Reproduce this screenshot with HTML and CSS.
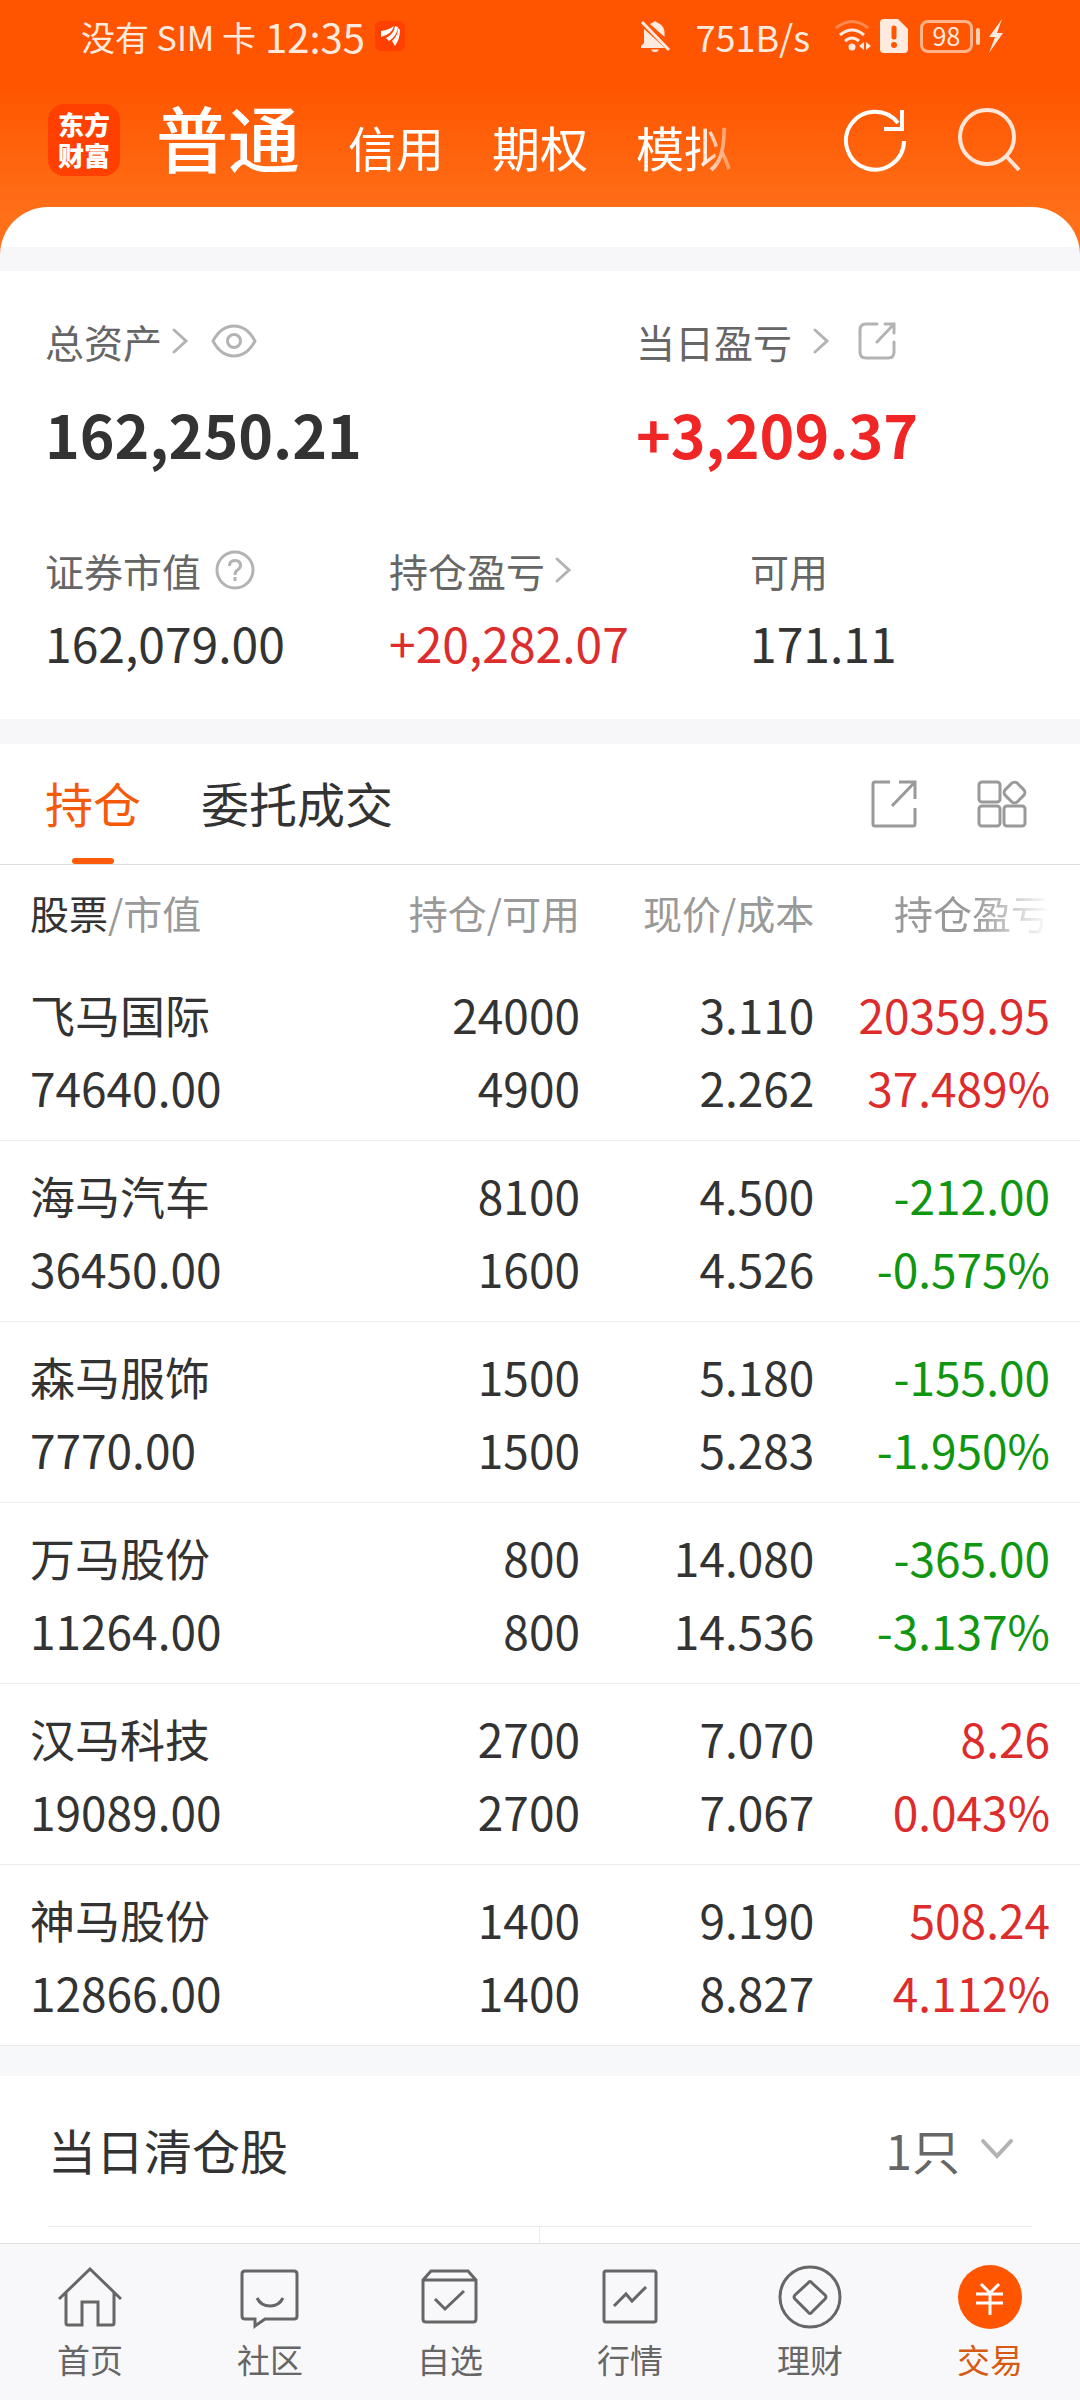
FILE: index.html
```html
<!DOCTYPE html>
<html lang="zh-CN">
<head>
<meta charset="UTF-8">
<meta name="viewport" content="width=device-width, initial-scale=1">
<title>交易 - 持仓</title>
<link rel="stylesheet" href="styles.css">
</head>
<body>
<header class="top">
  <div class="status">
    <span class="carrier">没有 SIM 卡</span>
    <span class="clock">12:35</span>
    <svg class="app-dot" width="30" height="30" viewBox="0 0 30 30" aria-hidden="true">
      <rect width="30" height="30" rx="6" fill="#ff4000"/>
      <path d="M6 10Q14 9 19 5Q17 13 6 16ZM11 17Q19 13 20 5L23 6Q22 15 14 20ZM17 20Q23 15 23 7L25 9Q25 18 20 25Z" fill="#fff"/>
    </svg>
    <span class="speed-group">
      <svg width="32" height="32" viewBox="0 0 32 32" aria-hidden="true">
        <path d="M11 4Q12 3 14 2.500Q16 0 18 2.500Q25 5 25.500 12V17ZM5 9L26 28H2V26L5 23ZM12 29.500H20Q19 32 16 32Q13 32 12 29.500Z" fill="currentColor"/>
        <path d="M3 2L30 30" stroke="currentColor" stroke-width="3"/>
      </svg>
      <span class="speed">751B/s</span>
    </span>
    <span class="signals">
      <svg width="38" height="34" viewBox="0 0 38 34" fill="none" aria-hidden="true">
        <path d="M2 9Q18 -4 34 9" stroke="currentColor" stroke-width="3" opacity=".35"/>
        <path d="M6 16Q18 6 30 16M11 22Q18 16 25 22" stroke="currentColor" stroke-width="3"/>
        <circle cx="18" cy="28" r="3.500" fill="currentColor"/>
        <path d="M30 23V31L25 27ZM32 23V31L37 27Z" fill="currentColor"/>
      </svg>
      <svg width="28" height="34" viewBox="0 0 28 34" aria-hidden="true">
        <path d="M4 0H18L28 10V30Q28 34 24 34H4Q0 34 0 30V4Q0 0 4 0Z" fill="currentColor"/>
        <path d="M14 9V18" stroke="#ff5500" stroke-width="5" stroke-linecap="round"/>
        <circle cx="14" cy="26" r="3" fill="#ff5500"/>
      </svg>
    </span>
    <span class="battery"><span class="battery-box">98</span><span class="battery-nub"></span></span>
    <svg width="16" height="34" viewBox="0 0 16 34" aria-hidden="true"><path d="M14 0L1 18H7L1 34L15 14H9Z" fill="currentColor"/></svg>
  </div>
  <div class="bar">
    <div class="logo">东方<br>财富</div>
    <nav class="accounts" aria-label="账户类型">
      <button type="button" class="account account-on">普通</button>
      <button type="button" class="account">信用</button>
      <button type="button" class="account">期权</button>
      <button type="button" class="account">模拟</button>
    </nav>
    <button type="button" class="icon-btn" aria-label="刷新">
      <svg width="64" height="64" viewBox="0 0 64 64" fill="none" stroke="#fff" stroke-width="4">
        <path d="M61 33A29 29 0 1 1 55 15"/><path d="M41 21H59V2"/>
      </svg>
    </button>
    <button type="button" class="icon-btn" aria-label="搜索">
      <svg width="64" height="64" viewBox="0 0 64 64" fill="none" stroke="#ffe6d9" stroke-width="4">
        <circle cx="29" cy="29" r="27"/><path d="M48 48L61 62"/>
      </svg>
    </button>
  </div>
  <div class="sheet-top"></div>
</header>
<main class="main">
  <section class="assets">
    <div class="assets-row assets-primary">
      <div>
        <div class="label">总资产
          <svg class="chev" width="18" height="28" viewBox="0 0 18 28"><path d="M3 3L15 14L3 25"/></svg>
          <button type="button" class="icon-btn eye" aria-label="隐藏金额">
            <svg width="46" height="34" viewBox="0 0 46 34" fill="none" stroke="#b3b3b3" stroke-width="3"><path d="M2 17Q10 2 23 2Q36 2 44 17Q36 32 23 32Q10 32 2 17Z"/><circle cx="23" cy="17" r="6.500"/></svg>
          </button>
        </div>
        <div class="total">162,250.21</div>
      </div>
      <div>
        <div class="label">当日盈亏
          <svg class="chev chev-far" width="18" height="28" viewBox="0 0 18 28"><path d="M3 3L15 14L3 25"/></svg>
          <button type="button" class="icon-btn share-day" aria-label="分享当日盈亏">
            <svg width="38" height="38" viewBox="0 0 38 38" fill="none" stroke="#b3b3b3" stroke-width="3" stroke-linecap="round"><path d="M19 2H8Q2 2 2 8V30Q2 36 8 36H30Q36 36 36 30V20M27 2H36V11M36 2L19 20"/></svg>
          </button>
        </div>
        <div class="total total-up">+3,209.37</div>
      </div>
    </div>
    <div class="assets-row assets-secondary">
      <div>
        <div class="label">证券市值
          <button type="button" class="icon-btn help" aria-label="说明">
            <svg width="40" height="40" viewBox="0 0 40 40" fill="none" stroke="#b3b3b3" stroke-width="3"><circle cx="20" cy="20" r="18"/><path d="M14.500 16Q14.500 10.500 20 10.500Q25.500 10.500 25.500 15.500Q25.500 18 22.500 20Q20 21.500 20 25"/><path d="M20 27V31"/></svg>
          </button>
        </div>
        <div class="amount">162,079.00</div>
      </div>
      <div>
        <div class="label">持仓盈亏
          <svg class="chev" width="18" height="28" viewBox="0 0 18 28"><path d="M3 3L15 14L3 25"/></svg>
        </div>
        <div class="amount up">+20,282.07</div>
      </div>
      <div>
        <div class="label">可用</div>
        <div class="amount">171.11</div>
      </div>
    </div>
  </section>
  <section class="holdings">
    <div class="tabs">
      <button type="button" class="tab tab-on">持仓</button>
      <button type="button" class="tab">委托成交</button>
      <div class="tools">
        <button type="button" class="icon-btn" aria-label="分享持仓">
          <svg width="46" height="48" viewBox="0 0 46 48" fill="none" stroke="#999" stroke-width="3"><path d="M19 2H4Q2 2 2 4V44Q2 46 4 46H42Q44 46 44 44V28M28 2H44V19M44 2L21 26"/></svg>
        </button>
        <button type="button" class="icon-btn" aria-label="更多功能">
          <svg width="50" height="48" viewBox="0 0 50 48" fill="none" stroke="#999" stroke-width="3"><rect x="2" y="2" width="21" height="20" rx="3"/><rect x="2" y="26" width="21" height="20" rx="3"/><rect x="27" y="26" width="21" height="20" rx="3"/><rect x="29" y="4" width="17" height="17" rx="4" transform="rotate(45 37.500 12.500)"/></svg>
        </button>
      </div>
    </div>
    <table class="stocks">
      <colgroup><col class="c-name"><col class="c-num"><col class="c-num"><col class="c-gain"></colgroup>
      <thead>
        <tr><th scope="col"><span class="strong">股票</span>/市值</th><th scope="col">持仓/可用</th><th scope="col">现价/成本</th><th scope="col"><span class="fade">持仓盈亏</span></th></tr>
      </thead>
      <tbody>
        <tr><td><span class="name">飞马国际</span><span>74640.00</span></td><td><span>24000</span><span>4900</span></td><td><span>3.110</span><span>2.262</span></td><td class="up"><span>20359.95</span><span>37.489%</span></td></tr>
        <tr><td><span class="name">海马汽车</span><span>36450.00</span></td><td><span>8100</span><span>1600</span></td><td><span>4.500</span><span>4.526</span></td><td class="down"><span>-212.00</span><span>-0.575%</span></td></tr>
        <tr><td><span class="name">森马服饰</span><span>7770.00</span></td><td><span>1500</span><span>1500</span></td><td><span>5.180</span><span>5.283</span></td><td class="down"><span>-155.00</span><span>-1.950%</span></td></tr>
        <tr><td><span class="name">万马股份</span><span>11264.00</span></td><td><span>800</span><span>800</span></td><td><span>14.080</span><span>14.536</span></td><td class="down"><span>-365.00</span><span>-3.137%</span></td></tr>
        <tr><td><span class="name">汉马科技</span><span>19089.00</span></td><td><span>2700</span><span>2700</span></td><td><span>7.070</span><span>7.067</span></td><td class="up"><span>8.26</span><span>0.043%</span></td></tr>
        <tr><td><span class="name">神马股份</span><span>12866.00</span></td><td><span>1400</span><span>1400</span></td><td><span>9.190</span><span>8.827</span></td><td class="up"><span>508.24</span><span>4.112%</span></td></tr>
      </tbody>
    </table>
  </section>
  <section class="closed">
    <div class="closed-head">
      <h2 class="closed-title">当日清仓股</h2>
      <button type="button" class="closed-toggle">1只
        <svg width="34" height="22" viewBox="0 0 34 22" fill="none" stroke="#b3b3b3" stroke-width="4" stroke-linecap="round"><path d="M3 3L17 18L31 3"/></svg>
      </button>
    </div>
    <div class="closed-cols"><div></div><div></div></div>
  </section>
</main>
<nav class="dock" aria-label="主导航">
  <a class="dock-item" href="#home">
    <svg width="64" height="64" viewBox="0 0 64 64"><path d="M1 34L32 4L63 34M8 28V58Q8 60 10 60H24V37H40V60H54Q56 60 56 58V28"/></svg>首页</a>
  <a class="dock-item" href="#community">
    <svg width="64" height="64" viewBox="0 0 64 64"><path d="M7 6H56Q59 6 59 9V51Q59 54 56 54H27L17 61V54H7Q4 54 4 51V9Q4 6 7 6ZM19 33Q23 41 32 41Q41 41 45 33"/></svg>社区</a>
  <a class="dock-item" href="#watchlist">
    <svg width="64" height="64" viewBox="0 0 64 64"><path d="M5 15L13 6H50L58 15V54Q58 57 55 57H8Q5 57 5 54ZM5 15H58M17 34L27 44L46 26"/></svg>自选</a>
  <a class="dock-item" href="#market">
    <svg width="64" height="64" viewBox="0 0 64 64"><rect x="6" y="6" width="52" height="51" rx="2"/><path d="M16 41L28 29L34 36L48 22"/></svg>行情</a>
  <a class="dock-item" href="#wealth">
    <svg width="64" height="64" viewBox="0 0 64 64"><circle cx="32" cy="32" r="30"/><path d="M30 18Q32 15 34 18L47 30Q49 32 47 34L34 47Q32 50 30 47L17 34Q15 32 17 30Z"/></svg>理财</a>
  <a class="dock-item dock-on" href="#trade" aria-current="page">
    <svg width="64" height="64" viewBox="0 0 64 64"><circle class="coin" cx="32" cy="32" r="32"/><path class="yen" d="M23 19L32 28L41 19M32 28V50M18 29H45M18 38H45"/></svg>交易</a>
</nav>
</body>
</html>
```

FILE: styles.css
```css
* { box-sizing: border-box; }

body {
  margin: 0;
  min-height: 100vh;
  display: flex;
  flex-direction: column;
  background: #fff;
  color: #333;
  font-family: "Noto Sans CJK SC", "Noto Sans", sans-serif;
}

button {
  margin: 0;
  padding: 0;
  border: 0;
  background: none;
  color: inherit;
  font: inherit;
}

svg { display: block; flex: none; }
.icon-btn { display: block; flex: none; }

/* Header */
.top { background: linear-gradient(#ff5500 84px, #ff7019 220px); }

.status {
  display: flex;
  align-items: center;
  height: 72px;
  padding: 0 76px 0 81px;
  color: #ffeadf;
  white-space: nowrap;
}
.carrier { font-size: 34px; }
.clock { margin-left: 9px; font-size: 40px; }
.app-dot { margin-left: 10px; }
.speed-group { display: flex; align-items: center; gap: 24px; margin-left: auto; }
.speed { font-size: 36px; }
.signals { display: flex; align-items: center; gap: 8px; margin-left: 24px; }
.battery { display: flex; align-items: center; gap: 3px; margin: 0 8px 0 12px; }
.battery-box {
  width: 53px;
  height: 33px;
  border: 3px solid #ffb48c;
  border-radius: 8px;
  font-size: 25px;
  line-height: 25px;
  text-align: center;
}
.battery-nub { width: 4px; height: 17px; border-radius: 2px; background: #ffd0b5; }

.bar {
  display: flex;
  align-items: center;
  height: 135px;
  padding: 0 58px 0 48px;
  color: #fff;
}
.logo {
  flex: none;
  width: 72px;
  height: 72px;
  padding-top: 4px;
  border-radius: 16px;
  background: #ff4000;
  font-size: 26px;
  font-weight: 900;
  line-height: 31px;
  text-align: center;
}
.accounts {
  flex: 1;
  display: flex;
  align-items: baseline;
  gap: 48px;
  margin: 0 99px 0 36px;
  padding-top: 2px;
  overflow: hidden;
  -webkit-mask-image: linear-gradient(to right, #000 calc(100% - 44px), transparent);
  mask-image: linear-gradient(to right, #000 calc(100% - 44px), transparent);
}
.account { flex: none; font-size: 48px; line-height: 108px; }
.account-on { font-size: 72px; font-weight: 500; }
.bar .icon-btn + .icon-btn { margin-left: 51px; }

.sheet-top {
  height: 64px;
  border-radius: 48px 48px 0 0;
  background: linear-gradient(#fff 40px, #f7f7fa 40px);
}

.main { flex: 1; display: flex; flex-direction: column; }
.up { color: #dd2c2c; }
.down { color: #119611; }

/* Account summary */
.assets { padding: 42px 0 47px 45px; }
.assets-row { display: grid; }
.assets-primary { grid-template-columns: 591fr 444fr; }
.assets-secondary { grid-template-columns: 344fr 361fr 330fr; margin-top: 68px; }
.label {
  display: flex;
  align-items: center;
  height: 56px;
  color: #666;
  font-size: 39px;
  white-space: nowrap;
}
.chev { margin-left: 9px; fill: none; stroke: #b3b3b3; stroke-width: 3; stroke-linecap: round; }
.chev-far { margin-left: 20px; }
.eye { margin-left: 22px; }
.share-day { margin-left: 28px; }
.help { margin-left: 14px; }
.total { margin-top: 25px; font-size: 59px; font-weight: 700; line-height: 80px; }
.total-up { color: #f02525; }
.amount { margin-top: 14px; font-size: 48px; line-height: 60px; }

/* Holdings */
.holdings { border-top: 25px solid #f7f7fa; }
.tabs {
  display: flex;
  gap: 60px;
  height: 121px;
  padding: 0 53px 0 45px;
  border-bottom: 1px solid #ddd;
}
.tab { position: relative; padding-bottom: 4px; font-size: 48px; }
.tab-on { color: #f55a0a; }
.tab-on::after {
  content: "";
  position: absolute;
  bottom: 0;
  left: 50%;
  width: 42px;
  height: 6px;
  margin-left: -21px;
  border-radius: 3px;
  background: #ff5a0a;
}
.tools { display: flex; align-items: center; gap: 60px; margin-left: auto; }

.stocks { width: 100%; table-layout: fixed; border-spacing: 0; text-align: right; white-space: nowrap; }
.c-name { width: 32%; }
.c-num { width: 21.7%; }
.c-gain { width: 24.6%; }
.stocks th {
  height: 95px;
  padding: 0 0 2px;
  color: #999;
  font-size: 39px;
  font-weight: 400;
  line-height: 56px;
  text-align: right;
}
.stocks td { padding: 18px 0 16px; border-bottom: 1px solid #ebebeb; font-size: 46px; line-height: 73px; }
.stocks td span { display: block; }
.stocks .name { font-size: 45px; }
.stocks th:first-child, .stocks td:first-child { padding-left: 30px; text-align: left; }
.stocks th:last-child, .stocks td:last-child { padding-right: 30px; }
.strong { color: #333; }
.fade {
  display: inline-block;
  -webkit-mask-image: linear-gradient(to right, #000 52%, transparent);
  mask-image: linear-gradient(to right, #000 52%, transparent);
}

/* Positions closed today */
.closed {
  flex: 1;
  display: flex;
  flex-direction: column;
  padding: 0 48px;
  border-top: 30px solid #f7f8fa;
}
.closed-head {
  display: flex;
  align-items: center;
  justify-content: space-between;
  height: 151px;
  padding: 0 18px 4px 0;
  border-bottom: 1px solid #ebebeb;
}
.closed-title { margin: 0; font-size: 48px; font-weight: 400; }
.closed-toggle { display: flex; align-items: center; gap: 20px; color: #666; font-size: 48px; }
.closed-cols { flex: 1; display: grid; grid-template-columns: 1fr 1fr; min-height: 16px; }
.closed-cols div:first-child { border-right: 1px solid #ebebeb; }

/* Bottom navigation */
.dock {
  position: sticky;
  bottom: 0;
  display: flex;
  padding: 21px 0;
  border-top: 1px solid #e0e0e0;
  background: #f8f8fa;
}
.dock-item {
  flex: 1;
  display: flex;
  flex-direction: column;
  align-items: center;
  gap: 10px;
  color: #666;
  font-size: 33px;
  line-height: 40px;
  text-decoration: none;
}
.dock-item svg { fill: none; stroke: #666; stroke-width: 3; }
.dock-on { color: #d65a14; }
.dock-item .coin { fill: #ff5500; stroke: none; }
.dock-item .yen { stroke: #fff; }
```
